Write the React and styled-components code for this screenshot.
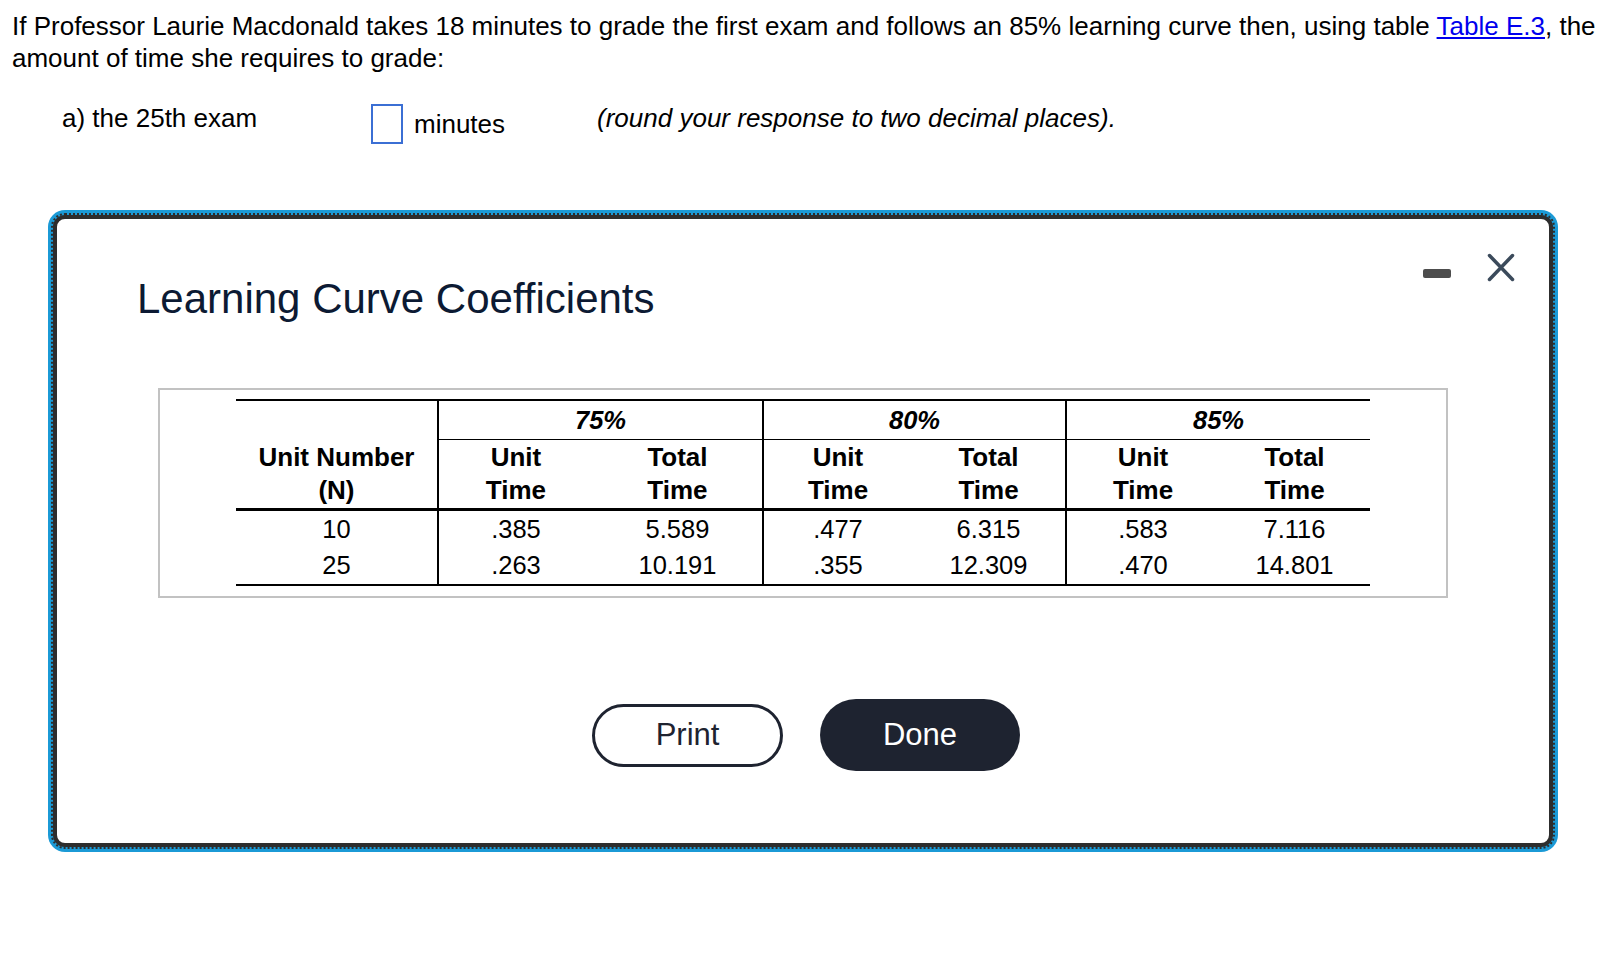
import React from "react";
import styled, { createGlobalStyle } from "styled-components";

const GlobalStyle = createGlobalStyle`
  * { box-sizing: border-box; }
  html, body { margin: 0; padding: 0; background: #fff; }
  body { font-family: "Liberation Sans", Arial, Helvetica, sans-serif; color: #000; }
`;

const Page = styled.div`
  padding: 10px 12px 40px;
`;

const Question = styled.p`
  margin: 0;
  font-size: 26px;
  line-height: 32px;
`;

const Link = styled.a`
  color: #0000ee;
  text-decoration: underline;
`;

const AnswerRow = styled.div`
  display: flex;
  align-items: flex-start;
  margin-top: 28px;
  padding-left: 50px;
  font-size: 26px;
  line-height: 32px;
`;

const Label = styled.span`
  width: 309px;
`;

const AnswerBox = styled.span`
  display: block;
  width: 32px;
  height: 40px;
  margin-top: 2px;
  border: 2px solid #3b6fd4;
`;

const UnitText = styled.span`
  margin-left: 11px;
  margin-top: 6px;
`;

const Hint = styled.span`
  margin-left: 92px;
  font-style: italic;
`;

const Dialog = styled.div`
  width: 1500px;
  margin: 71px 0 0 41px;
  background: #fff;
  border: 4px solid #2d2d2d;
  border-radius: 12px;
  outline: 2px dotted #2d2d2d;
  outline-offset: 0;
  box-shadow: 0 0 0 5px #1b9ad6;
`;

const Header = styled.div`
  display: flex;
  justify-content: space-between;
  align-items: flex-start;
  padding: 34px 34px 0 80px;
`;

const Title = styled.h2`
  margin: 22px 0 0;
  font-size: 42px;
  line-height: 48px;
  font-weight: 400;
  color: #0c1a33;
`;

const Controls = styled.div`
  display: flex;
  align-items: flex-start;
  gap: 36px;
`;

const MinimizeButton = styled.button`
  width: 28px;
  height: 9px;
  margin-top: 16px;
  padding: 0;
  border: none;
  border-radius: 2px;
  background: #4d4d4d;
`;

const CloseButton = styled.button`
  width: 28px;
  height: 29px;
  padding: 0;
  border: none;
  background: none;
  display: block;
  svg { display: block; }
`;

const TableFrame = styled.div`
  width: 1290px;
  margin: 65px auto 0;
  border: 2px solid #c2c2c2;
  padding: 9px 0 10px;
  display: flex;
  justify-content: center;
`;

const Table = styled.table`
  width: 1134px;
  table-layout: fixed;
  border-collapse: separate;
  border-spacing: 0;
  border-top: 2px solid #000;
  border-bottom: 2px solid #000;
  font-size: 25.5px;
  color: #000;
`;

const Cell = styled.td`
  padding: 0;
  text-align: center;
  vertical-align: middle;
  border-left: ${(p) => (p.$divider ? "2px solid #000" : "none")};
`;

const BlankHead = styled(Cell)`
  height: 39px;
`;

const GroupHead = styled(Cell)`
  height: 39px;
  font-weight: 700;
  font-style: italic;
  border-bottom: 1.5px solid #000;
`;

const HeadCell = styled(Cell)`
  height: 71px;
  font-size: 26px;
  font-weight: 700;
  line-height: 33px;
  border-bottom: 3.5px solid #000;
`;

const DataCell = styled(Cell)`
  height: ${(p) => (p.$last ? "36px" : "37px")};
  line-height: 1;
`;

const Actions = styled.div`
  display: flex;
  justify-content: center;
  align-items: center;
  gap: 37px;
  margin-top: 101px;
  padding: 0 0 72px 6px;
`;

const PillButton = styled.button`
  font-family: "Liberation Sans", Arial, Helvetica, sans-serif;
  font-size: 31px;
  border-radius: 999px;
  cursor: pointer;
  padding: 0;
  width: ${(p) => (p.$primary ? "200px" : "191px")};
  height: ${(p) => (p.$primary ? "72px" : "63px")};
  background: ${(p) => (p.$primary ? "#1e2330" : "#fff")};
  color: ${(p) => (p.$primary ? "#fff" : "#1e2330")};
  border: ${(p) => (p.$primary ? "none" : "3px solid #1e2330")};
`;

const groups = [
  { label: "75%", rows: [[".385", "5.589"], [".263", "10.191"]] },
  { label: "80%", rows: [[".477", "6.315"], [".355", "12.309"]] },
  { label: "85%", rows: [[".583", "7.116"], [".470", "14.801"]] },
];
const units = ["10", "25"];
const colWidths = [201, 156, 169, 150, 153, 154, 151];

export default function App() {
  return (
    <Page>
      <GlobalStyle />
      <Question>
        <span>
          If Professor Laurie Macdonald takes 18 minutes to grade the first exam and follows an 85% learning curve then, using table
        </span>{" "}
        <Link href="#">Table E.3</Link>
        <span>, the</span> <span>amount of time she requires to grade:</span>
      </Question>
      <AnswerRow>
        <Label>a) the 25th exam</Label>
        <AnswerBox />
        <UnitText>minutes</UnitText>
        <Hint>(round your response to two decimal places).</Hint>
      </AnswerRow>

      <Dialog>
        <Header>
          <Title>Learning Curve Coefficients</Title>
          <Controls>
            <MinimizeButton aria-label="Minimize" />
            <CloseButton aria-label="Close">
              <svg width="28" height="29" viewBox="0 0 28 29">
                <path d="M2.5 2.5 L25.5 26.5 M25.5 2.5 L2.5 26.5" stroke="#3b4a5b" strokeWidth="3.5" strokeLinecap="round" fill="none" />
              </svg>
            </CloseButton>
          </Controls>
        </Header>

        <TableFrame>
          <Table>
            <colgroup>
              {colWidths.map((w, i) => (
                <col key={i} style={{ width: w }} />
              ))}
            </colgroup>
            <tbody>
              <tr>
                <BlankHead />
                {groups.map((g) => (
                  <GroupHead key={g.label} colSpan={2} $divider>
                    {g.label}
                  </GroupHead>
                ))}
              </tr>
              <tr>
                <HeadCell>
                  Unit Number
                  <br />
                  (N)
                </HeadCell>
                {groups.map((g) => (
                  <React.Fragment key={g.label}>
                    <HeadCell $divider>
                      Unit
                      <br />
                      Time
                    </HeadCell>
                    <HeadCell>
                      Total
                      <br />
                      Time
                    </HeadCell>
                  </React.Fragment>
                ))}
              </tr>
              {units.map((u, r) => (
                <tr key={u}>
                  <DataCell $last={r === 1}>{u}</DataCell>
                  {groups.map((g) => (
                    <React.Fragment key={g.label}>
                      <DataCell $divider $last={r === 1}>{g.rows[r][0]}</DataCell>
                      <DataCell $last={r === 1}>{g.rows[r][1]}</DataCell>
                    </React.Fragment>
                  ))}
                </tr>
              ))}
            </tbody>
          </Table>
        </TableFrame>

        <Actions>
          <PillButton>Print</PillButton>
          <PillButton $primary>Done</PillButton>
        </Actions>
      </Dialog>
    </Page>
  );
}
